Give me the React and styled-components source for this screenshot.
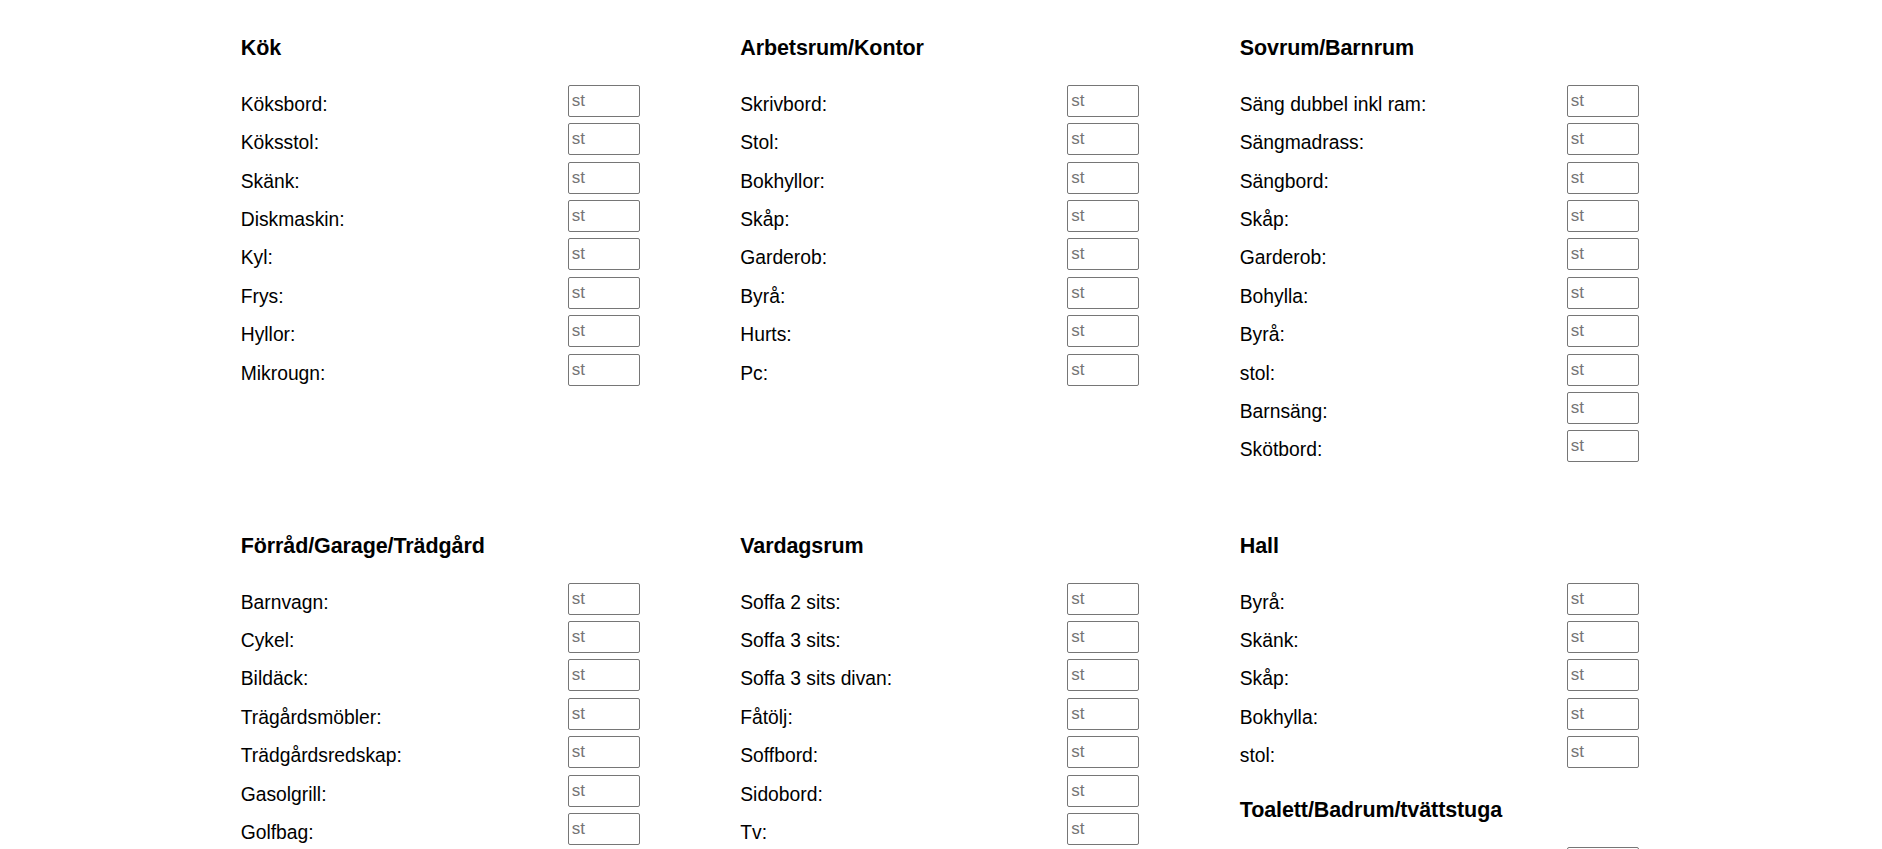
import React from 'react'
import styled, { createGlobalStyle } from 'styled-components'

const GlobalStyle = createGlobalStyle`
  html, body {
    margin: 0;
    padding: 0;
    background: #fff;
    overflow: hidden;
  }
  body {
    font-family: "Liberation Sans", Arial, sans-serif;
    color: #000;
  }
`

const Page = styled.div`
  display: grid;
  grid-template-columns: repeat(3, 499.5px);
  justify-content: center;
  row-gap: 41px;
  padding-top: 35px;
`

const Column = styled.div`
  padding-left: 49px;
`

const Section = styled.section`
  margin-bottom: 29.6px;
`

const Heading = styled.h3`
  margin: 1px 0 23.6px;
  font-size: 21.5px;
  line-height: 25.2px;
  font-weight: bold;
  letter-spacing: -0.1px;
`

const Row = styled.div`
  display: flex;
  align-items: flex-start;
  height: 32px;
  margin-bottom: 6.4px;
`

const Label = styled.label`
  width: 327px;
  flex-shrink: 0;
  padding-top: 4px;
  font-size: 19.3px;
  line-height: 32px;
`

const Amount = styled.input`
  box-sizing: border-box;
  width: 72px;
  height: 32px;
  margin: 0;
  padding: 0 3px;
  border: 1px solid #767676;
  border-radius: 2px;
  font-family: "Liberation Sans", Arial, sans-serif;
  font-size: 17px;
  color: #000;
  &::placeholder {
    color: #757575;
  }
`

const grid = [
  [
    { title: 'Kök', items: ['Köksbord', 'Köksstol', 'Skänk', 'Diskmaskin', 'Kyl', 'Frys', 'Hyllor', 'Mikrougn'] },
  ],
  [
    { title: 'Arbetsrum/Kontor', items: ['Skrivbord', 'Stol', 'Bokhyllor', 'Skåp', 'Garderob', 'Byrå', 'Hurts', 'Pc'] },
  ],
  [
    {
      title: 'Sovrum/Barnrum',
      items: ['Säng dubbel inkl ram', 'Sängmadrass', 'Sängbord', 'Skåp', 'Garderob', 'Bohylla', 'Byrå', 'stol', 'Barnsäng', 'Skötbord'],
    },
  ],
  [
    {
      title: 'Förråd/Garage/Trädgård',
      items: ['Barnvagn', 'Cykel', 'Bildäck', 'Trägårdsmöbler', 'Trädgårdsredskap', 'Gasolgrill', 'Golfbag'],
    },
  ],
  [
    {
      title: 'Vardagsrum',
      items: ['Soffa 2 sits', 'Soffa 3 sits', 'Soffa 3 sits divan', 'Fåtölj', 'Soffbord', 'Sidobord', 'Tv'],
    },
  ],
  [
    { title: 'Hall', items: ['Byrå', 'Skänk', 'Skåp', 'Bokhylla', 'stol'] },
    { title: 'Toalett/Badrum/tvättstuga', items: ['Tvättmaskin'] },
  ],
]

const RoomSection = ({ title, items }) => (
  <Section>
    <Heading>{title}</Heading>
    {items.map((item, i) => (
      <Row key={i}>
        <Label>{item}:</Label>
        <Amount type="text" placeholder="st" />
      </Row>
    ))}
  </Section>
)

const App = () => (
  <>
    <GlobalStyle />
    <Page>
      {grid.map((sections, i) => (
        <Column key={i}>
          {sections.map(s => (
            <RoomSection key={s.title} {...s} />
          ))}
        </Column>
      ))}
    </Page>
  </>
)

export default App
